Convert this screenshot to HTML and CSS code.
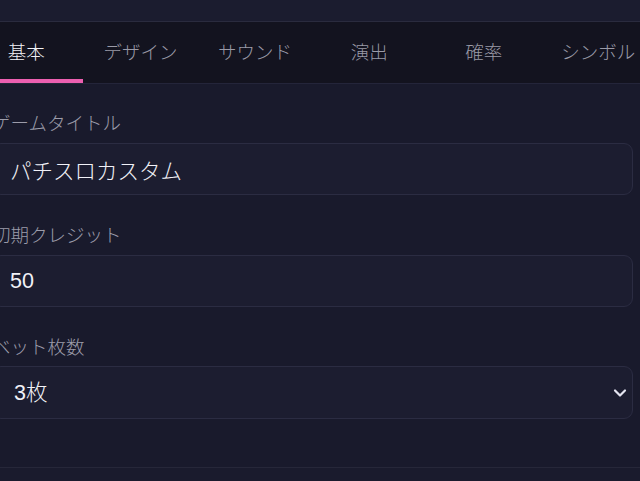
FILE: index.html
```html
<!DOCTYPE html>
<html lang="ja">
<head>
<meta charset="utf-8">
<title>設定</title>
<link rel="stylesheet" href="styles.css">
</head>
<body>
<div class="top-strip"></div>
<nav class="tabs">
  <div class="tab active">基本</div>
  <div class="tab">デザイン</div>
  <div class="tab">サウンド</div>
  <div class="tab">演出</div>
  <div class="tab">確率</div>
  <div class="tab">シンボル</div>
</nav>
<main class="form">
  <div class="field">
    <label class="label" for="title">ゲームタイトル</label>
    <input class="input" id="title" type="text" value="パチスロカスタム">
  </div>
  <div class="field">
    <label class="label" for="credit">初期クレジット</label>
    <input class="input" id="credit" type="text" value="50">
  </div>
  <div class="field">
    <label class="label" for="bet">ベット枚数</label>
    <div class="select-wrap">
      <select class="select" id="bet">
        <option>3枚</option>
      </select>
      <svg class="chevron" width="14" height="10" viewBox="0 0 14 10"><path d="M2 2.5 L7 7.5 L12 2.5" fill="none" stroke="#e4e4f0" stroke-width="2.2" stroke-linecap="round" stroke-linejoin="round"/></svg>
    </div>
  </div>
</main>
<div class="next-section"></div>
</body>
</html>
```

FILE: styles.css
```css
html, body {
  margin: 0;
  padding: 0;
  background: #191a2c;
  overflow: hidden;
  height: 481px;
}
body {
  font-family: "Liberation Sans", "Noto Sans CJK JP", sans-serif;
  font-weight: 300;
  color: #f0f0f6;
}
.top-strip {
  height: 21px;
  background: #1b1c2f;
  border-bottom: 1px solid #2a2b3e;
}
.tabs {
  display: flex;
  margin-left: -31px;
  width: 700px;
  height: 61px;
  background: #13131f;
  border-bottom: 1px solid #24253a;
}
.tab {
  flex: 0 0 114.4px;
  box-sizing: border-box;
  display: flex;
  align-items: center;
  justify-content: center;
  font-size: 18.5px;
  color: #9a9aa7;
  border-bottom: 4px solid transparent;
}
.tab.active {
  color: #f2f2f7;
  border-bottom-color: #ec5fb0;
}
.form {
  margin: 0 7px 0 -8px;
  padding-top: 28px;
  display: flex;
  flex-direction: column;
  gap: 29px;
}
.field {
  display: flex;
  flex-direction: column;
  gap: 7px;
}
.label {
  font-size: 18.5px;
  line-height: 24px;
  color: #9c9caa;
}
.input, .select {
  box-sizing: border-box;
  width: 100%;
  height: 52px;
  margin: 0;
  background: #1c1d30;
  border: 1px solid #2b2c42;
  border-radius: 9px;
  color: #f1f1f7;
  font-family: "Liberation Sans", "Noto Sans CJK JP", sans-serif;
  font-weight: 300;
  font-size: 21.5px;
  padding: 0 0 0 17px;
  outline: none;
}
.select-wrap {
  position: relative;
  margin-top: -1px;
}
.select {
  -webkit-appearance: none;
  appearance: none;
  height: 53px;
  padding-left: 21px;
}
.chevron {
  position: absolute;
  right: 6px;
  top: 22px;
}
.next-section {
  margin-top: 48px;
  border-top: 1px solid #262739;
  height: 20px;
  background: #1a1b2d;
}
```
